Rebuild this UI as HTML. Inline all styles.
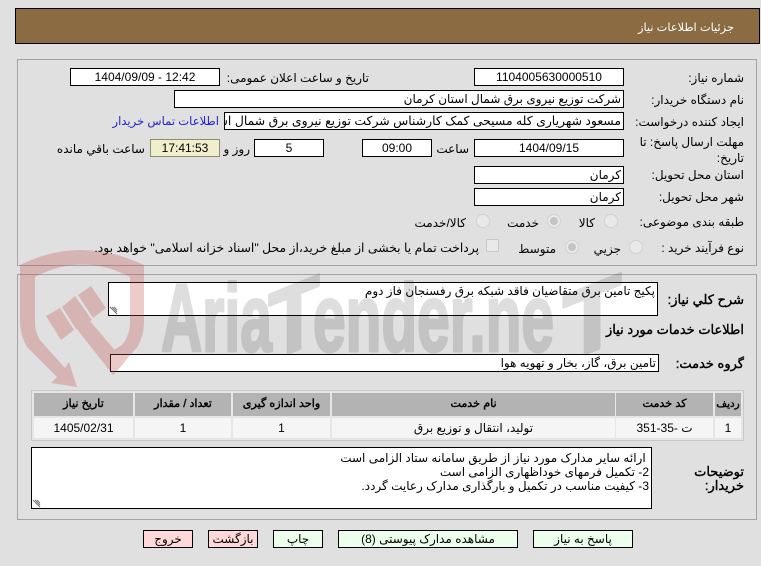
<!DOCTYPE html>
<html lang="fa"><head><meta charset="utf-8"><title>جزئیات اطلاعات نیاز</title>
<style>
html,body{margin:0;padding:0}
body{width:761px;height:566px;background:#e0e0e0;position:relative;overflow:hidden;font-family:"Liberation Sans","DejaVu Sans",sans-serif;font-size:12px;color:#000}
div{box-sizing:border-box}
.a{position:absolute}
.l{position:absolute;white-space:nowrap;direction:rtl;line-height:16px;height:16px;font-size:12px}
.i{position:absolute;background:#fff;border:1px solid #000;height:18px;line-height:16px;white-space:nowrap;overflow:hidden;direction:rtl;font-size:12px}
.c{text-align:center}
.r{padding-right:2px}
.p{position:absolute;border:1px solid #a3a3a3;left:17px;width:740px}
.b{font-size:13px;-webkit-text-stroke:.4px #000}
.rd{position:absolute;width:14px;height:14px;border-radius:50%;background:#e9e9e9;border:1px solid #d2d2d2}
.rd.k:after{content:"";position:absolute;left:2px;top:2px;width:8px;height:8px;border-radius:50%;background:#c4c4c4}
.th,.td{position:absolute;text-align:center;direction:rtl;white-space:nowrap}
.th{background:#b3b3b3;height:23px;top:393px;line-height:23px;font-size:11.2px;-webkit-text-stroke:.4px #000}
.td{background:#f5f5f5;height:20px;top:418px;line-height:20px;font-size:12px}
.btn{position:absolute;top:530px;height:18px;border:1px solid #000;text-align:center;line-height:16px;direction:rtl;white-space:nowrap;font-size:12px}
.g{background:#ecffec}.pk{background:#ffd9d9}
</style></head><body>
<div class="a" style="left:15px;top:8px;width:745px;height:36px;background:#8b6b41;border:1px solid #000"></div>
<div class="l" style="right:27px;top:20px;color:#fff;font-size:11.4px">جزئیات اطلاعات نیاز</div>

<div class="p" style="top:59px;height:207px"></div>
<div class="p" style="top:274px;height:246px"></div>

<div class="l" style="right:17px;top:70px">شماره نیاز:</div>
<div class="i c" style="left:474px;width:150px;top:68px">1104005630000510</div>
<div class="l" style="right:392px;top:70px">تاریخ و ساعت اعلان عمومی:</div>
<div class="i c" style="left:70px;width:150px;top:68px">12:42 - 1404/09/09</div>

<div class="l" style="right:17px;top:92px">نام دستگاه خریدار:</div>
<div class="i r" style="left:174px;width:450px;top:90px">شرکت توزیع نیروی برق شمال استان کرمان</div>

<div class="l" style="right:17px;top:114px">ایجاد کننده درخواست:</div>
<div class="i r" style="left:224px;width:400px;top:112px;font-size:12.4px">مسعود شهریاری کله مسیحی کمک کارشناس شرکت توزیع نیروی برق شمال استان کرمان</div>
<div class="l" style="right:542px;top:114px;color:#2222cc;font-size:11.6px">اطلاعات تماس خریدار</div>

<div class="l" style="right:17px;top:134px">مهلت ارسال پاسخ: تا</div>
<div class="l" style="right:17px;top:150px">تاریخ:</div>
<div class="i c" style="left:474px;width:150px;top:139px">1404/09/15</div>
<div class="l" style="right:292px;top:141px">ساعت</div>
<div class="i c" style="left:362px;width:70px;top:139px">09:00</div>
<div class="i c" style="left:254px;width:70px;top:139px">5</div>
<div class="l" style="right:511px;top:141px">روز و</div>
<div class="i c" style="left:150px;width:70px;top:139px;background:#f0eecb;border-color:#8c8c70">17:41:53</div>
<div class="l" style="right:616px;top:141px">ساعت باقي مانده</div>

<div class="l" style="right:17px;top:167px">استان محل تحویل:</div>
<div class="i r" style="left:474px;width:150px;top:166px">کرمان</div>
<div class="l" style="right:17px;top:189px">شهر محل تحویل:</div>
<div class="i r" style="left:474px;width:150px;top:188px">کرمان</div>

<div class="l" style="right:17px;top:214px">طبقه بندی موضوعی:</div>
<div class="rd" style="left:604px;top:214px"></div>
<div class="l" style="right:166px;top:215px">کالا</div>
<div class="rd k" style="left:547px;top:214px"></div>
<div class="l" style="right:222px;top:215px">خدمت</div>
<div class="rd" style="left:476px;top:214px"></div>
<div class="l" style="right:295px;top:215px">کالا/خدمت</div>

<div class="l" style="right:17px;top:240px">نوع فرآیند خرید :</div>
<div class="rd" style="left:629px;top:240px"></div>
<div class="l" style="right:140px;top:241px">جزیي</div>
<div class="rd k" style="left:565px;top:240px"></div>
<div class="l" style="right:205px;top:241px">متوسط</div>
<div class="a" style="left:486px;top:239px;width:13px;height:13px;background:#e9e9e9;border:1px solid #c8c8c8;border-radius:2px"></div>
<div class="l" style="right:282px;top:240px;font-size:12.35px">پرداخت تمام یا بخشی از مبلغ خرید،از محل "اسناد خزانه اسلامی" خواهد بود.</div>

<div class="l b" style="right:17px;top:292px">شرح کلي نیاز:</div>
<div class="i r" style="left:108px;width:550px;top:282px;height:34px">پکیج تامین برق متقاضیان فاقد شبکه برق رفسنجان فاز دوم
<svg class="a" style="left:0;bottom:0" width="9" height="9"><path d="M1 1L8 8M3 1L8 6M5 1L8 4" stroke="#777" fill="none"/></svg></div>
<div class="l b" style="right:17px;top:322px">اطلاعات خدمات مورد نیاز</div>
<div class="l b" style="right:17px;top:356px">گروه خدمت:</div>
<div class="i r" style="left:110px;width:549px;top:354px">تامین برق، گاز، بخار و تهویه هوا</div>

<div class="a" style="left:31px;top:390px;width:713px;height:51px;background:#e6e6e6;border:1px solid #c8c8c8"></div>
<div class="th" style="left:34px;width:99px">تاریخ نیاز</div>
<div class="th" style="left:135px;width:96px">تعداد / مقدار</div>
<div class="th" style="left:233px;width:97px">واحد اندازه گیری</div>
<div class="th" style="left:332px;width:283px">نام خدمت</div>
<div class="th" style="left:616px;width:97px">کد خدمت</div>
<div class="th" style="left:715px;width:26px;font-size:10.5px">ردیف</div>
<div class="td" style="left:34px;width:99px">1405/02/31</div>
<div class="td" style="left:135px;width:96px">1</div>
<div class="td" style="left:233px;width:97px">1</div>
<div class="td" style="left:332px;width:283px">تولید، انتقال و توزیع برق</div>
<div class="td" style="left:616px;width:97px"><bdo dir="ltr">351-35- ت</bdo></div>
<div class="td" style="left:715px;width:26px">1</div>

<div class="l b" style="right:17px;top:464px">توضیحات</div>
<div class="l b" style="right:17px;top:478px">خریدار:</div>
<div class="i r" style="left:31px;width:621px;top:447px;height:62px;white-space:pre-line;line-height:14px;padding-top:3px">&nbsp;ارائه سایر مدارک مورد نیاز از طریق سامانه ستاد الزامی است
2- تکمیل فرمهای خوداظهاری الزامی است
3- کیفیت مناسب در تکمیل و بارگذاری مدارک رعایت گردد.
<svg class="a" style="left:0;bottom:0" width="9" height="9"><path d="M1 1L8 8M3 1L8 6M5 1L8 4" stroke="#777" fill="none"/></svg></div>

<div class="btn pk" style="left:143px;width:50px">خروج</div>
<div class="btn pk" style="left:208px;width:50px">بازگشت</div>
<div class="btn g" style="left:273px;width:50px">چاپ</div>
<div class="btn g" style="left:338px;width:180px">مشاهده مدارک پیوستی (8)</div>
<div class="btn g" style="left:533px;width:100px">پاسخ به نیاز</div>

<svg class="a" style="left:0;top:0;pointer-events:none" width="761" height="566" viewBox="0 0 761 566">
<g fill="rgb(196,76,76)" opacity=".29">
<path d="M20 265Q80 235 144 265L144 322Q144 335 138 346L113 375L100 358L122 345Q130 335 130 322L130 277Q82 252 35 277L35 322Q35 332 40 340L65 368L69 362L77 387L51 383L57 377L27 347Q20 335 20 322Z"/>
<path d="M76 328L90 321L125 362L113 375Z"/>
<path d="M46 316L60 308L74 330L61 340Z"/>
<path d="M62 307L75 296L92 320L76 329Z"/>
<path d="M78 295L91 286L106 308L93 318Z"/>
</g>
<g fill="rgb(40,40,40)" stroke="rgb(40,40,40)" stroke-width="3" stroke-linejoin="round" opacity=".15" font-family="Liberation Sans" font-weight="bold" font-size="96">
<text x="161" y="351" textLength="111" lengthAdjust="spacingAndGlyphs">Aria</text>
<text transform="translate(294,351) skewY(-22) scale(.87,1)" text-anchor="middle">T</text>
<text x="313" y="351" textLength="241" lengthAdjust="spacingAndGlyphs">ender.ne</text>
<text transform="translate(592,351) skewY(-22)" text-anchor="middle">T</text>
</g>
</svg>
</body></html>
